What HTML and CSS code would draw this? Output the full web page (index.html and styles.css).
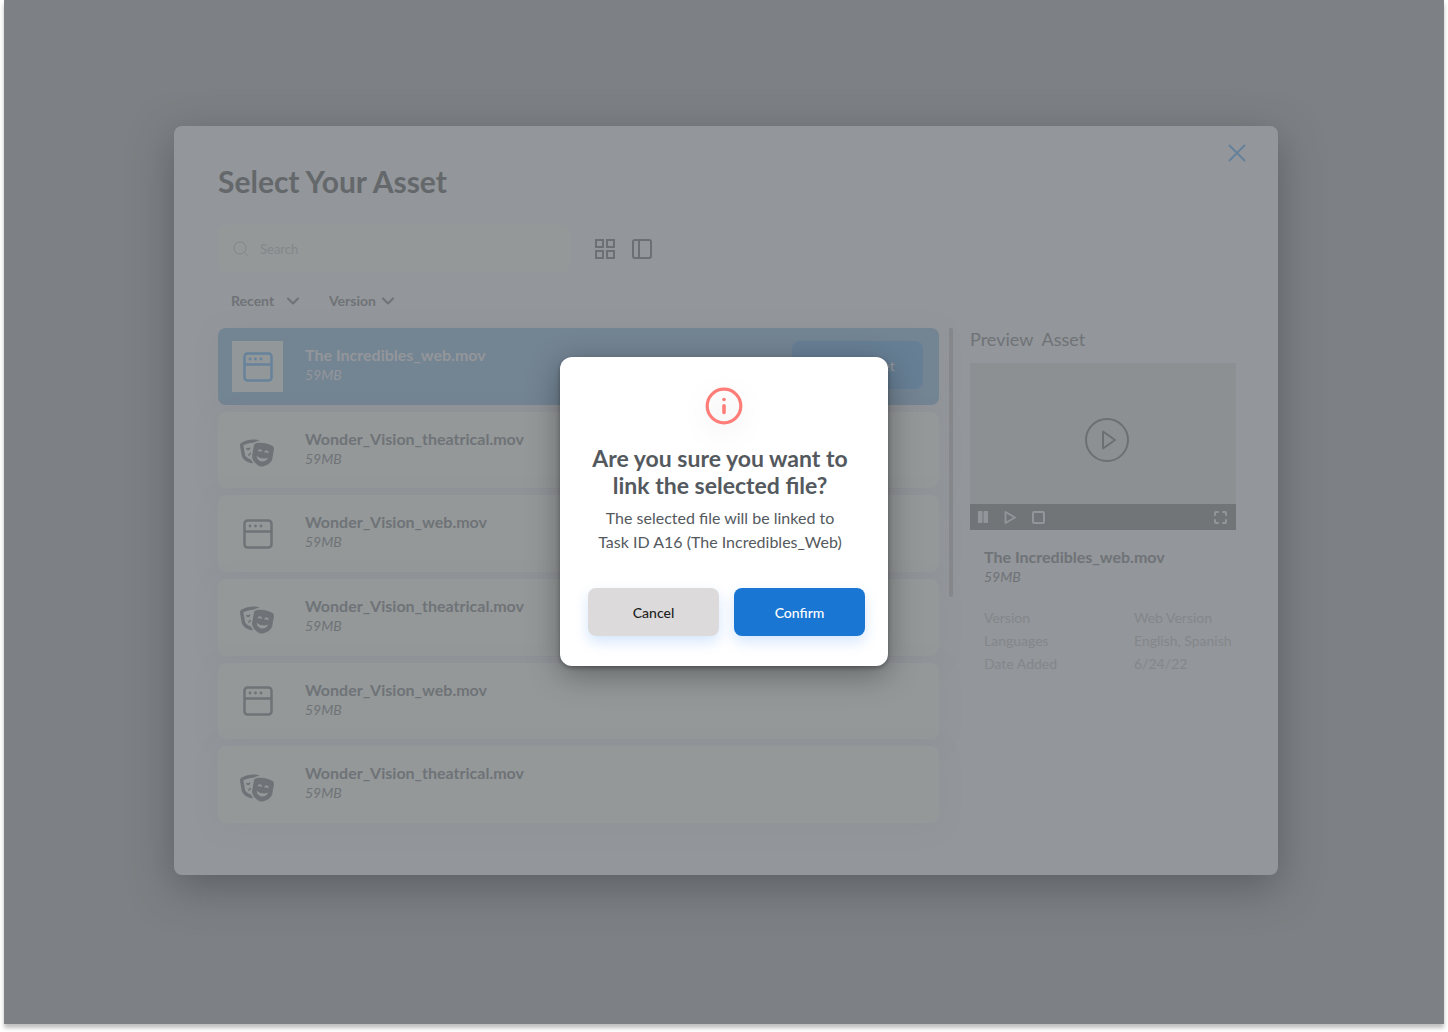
FILE: index.html
```html
<!DOCTYPE html>
<html lang="en">
<head>
  <meta charset="UTF-8">
  <meta name="viewport" content="width=device-width, initial-scale=1.0">
  <title>Select Your Asset</title>
  <link rel="stylesheet" href="styles.css">
</head>
<body>
  <!-- shared icons -->
  <svg class="sprite" aria-hidden="true">
    <symbol id="icon-web" viewBox="0 0 30 30">
      <rect x="1.5" y="1.5" width="27" height="27" rx="3" fill="none" stroke="currentColor" stroke-width="2.5"/>
      <path d="M1.5 12.5h27" fill="none" stroke="currentColor" stroke-width="2.5"/>
      <circle cx="7" cy="7" r="1.4" fill="currentColor"/>
      <circle cx="12.5" cy="7" r="1.4" fill="currentColor"/>
      <circle cx="18" cy="7" r="1.4" fill="currentColor"/>
    </symbol>
    <symbol id="icon-masks" viewBox="0 -120 640 640" preserveAspectRatio="xMinYMid meet">
      <path fill="currentColor" d="M206.86 245.15c-35.88 10.45-59.95 41.2-57.53 74.1 11.4-12.72 28.81-23.7 49.9-30.92l7.63-43.18zM95.81 295L64.08 115.49c-.29-1.62.28-2.62.24-2.65 57.76-32.06 123.12-49.01 189.01-49.01 1.61 0 3.23.17 4.85.19 13.95-13.47 31.73-22.83 51.59-26 18.89-3.02 38.05-4.55 57.18-5.32-9.99-13.95-24.48-24.23-41.77-27C301.27 1.89 277.24 0 253.32 0 176.66 0 101.02 19.42 33.2 57.06 9.03 70.48-3.92 98.48 1.05 126.58l31.73 179.51c14.23 80.52 136.33 142.08 204.45 142.08 3.59 0 6.75-.46 10.01-.8-13.52-17.08-28.94-40.48-39.5-67.58-47.61-12.98-106.06-51.62-111.93-84.79zm97.55-137.46c-.73-4.12-2.23-7.87-4.07-11.4-8.25 8.91-20.67 15.75-35.32 18.32-14.65 2.58-28.67.4-39.48-5.17-.52 3.94-.64 7.98.09 12.1 3.84 21.7 24.58 36.19 46.34 32.37 21.75-3.82 36.28-24.52 32.44-46.22zM606.8 120.9c-88.98-49.38-191.43-67.41-291.98-51.35-27.31 4.36-49.08 26.26-54.04 54.36l-31.73 179.51c-15.39 87.05 95.28 196.27 158.31 207.35 63.03 11.09 204.47-53.79 219.86-140.84l31.73-179.51c4.97-28.11-7.98-56.11-32.15-69.52zm-273.24 96.8c3.84-21.7 24.58-36.19 46.34-32.36 21.76 3.83 36.28 24.52 32.45 46.22-.73 4.12-2.23 7.87-4.07 11.4-8.25-8.91-20.67-15.75-35.32-18.32-14.65-2.58-28.67-.4-39.48 5.17-.53-3.95-.65-7.99.08-12.11zm70.47 198.76c-55.68-9.79-93.52-59.27-89.04-112.9 20.6 25.54 56.21 46.17 99.49 53.78 43.28 7.61 83.82.37 111.93-16.6-14.18 51.94-66.71 85.51-122.38 75.72zm130.3-151.34c-8.25-8.91-20.68-15.75-35.33-18.32-14.65-2.58-28.67-.4-39.48 5.17-.52-3.94-.64-7.98.09-12.1 3.84-21.7 24.58-36.19 46.34-32.37 21.75 3.83 36.28 24.52 32.45 46.22-.73 4.13-2.23 7.88-4.07 11.4z"/>
    </symbol>
    <symbol id="icon-chevron" viewBox="0 0 12 8">
      <path d="M1 1.5l5 5 5-5" fill="none" stroke="currentColor" stroke-width="2" stroke-linecap="round" stroke-linejoin="round"/>
    </symbol>
  </svg>

  <div class="screen">
    <main class="modal">
      <button class="close" aria-label="Close">
        <svg width="18" height="18" viewBox="0 0 18 18"><path d="M1.5 1.5l15 15M16.5 1.5l-15 15" fill="none" stroke="currentColor" stroke-width="2" stroke-linecap="round"/></svg>
      </button>
      <h1>Select Your Asset</h1>

      <div class="toolbar">
        <label class="search">
          <svg width="16" height="16" viewBox="0 0 16 16"><circle cx="7" cy="7" r="6" fill="none" stroke="currentColor"/><path d="M11.5 11.5l3 3" stroke="currentColor" stroke-linecap="round"/></svg>
          <input type="search" placeholder="Search" aria-label="Search">
        </label>
        <button class="view" aria-label="Grid view">
          <svg width="20" height="20" viewBox="0 0 20 20"><path d="M1 1h7v7H1zM12 1h7v7h-7zM1 12h7v7H1zM12 12h7v7h-7z" fill="none" stroke="currentColor" stroke-width="2"/></svg>
        </button>
        <button class="view" aria-label="Column view">
          <svg width="20" height="20" viewBox="0 0 20 20"><rect x="1" y="1" width="18" height="18" rx="2" fill="none" stroke="currentColor" stroke-width="2"/><path d="M7 1v18" stroke="currentColor" stroke-width="2"/></svg>
        </button>
      </div>

      <div class="filters">
        <div class="filter recent">
          <select aria-label="Sort order"><option>Recent</option></select>
          <svg width="12" height="8"><use href="#icon-chevron"/></svg>
        </div>
        <div class="filter version">
          <select aria-label="Version"><option>Version</option></select>
          <svg width="12" height="8"><use href="#icon-chevron"/></svg>
        </div>
      </div>

      <div class="content">
        <ul class="assets">
          <li class="asset selected">
            <span class="thumb"><svg width="30" height="30"><use href="#icon-web"/></svg></span>
            <div class="info"><h3>The Incredibles_web.mov</h3><p>59MB</p></div>
            <button class="select-asset">Select Asset</button>
          </li>
          <li class="asset">
            <span class="thumb"><svg width="35" height="34"><use href="#icon-masks"/></svg></span>
            <div class="info"><h3>Wonder_Vision_theatrical.mov</h3><p>59MB</p></div>
          </li>
          <li class="asset">
            <span class="thumb"><svg width="30" height="30"><use href="#icon-web"/></svg></span>
            <div class="info"><h3>Wonder_Vision_web.mov</h3><p>59MB</p></div>
          </li>
          <li class="asset">
            <span class="thumb"><svg width="35" height="34"><use href="#icon-masks"/></svg></span>
            <div class="info"><h3>Wonder_Vision_theatrical.mov</h3><p>59MB</p></div>
          </li>
          <li class="asset">
            <span class="thumb"><svg width="30" height="30"><use href="#icon-web"/></svg></span>
            <div class="info"><h3>Wonder_Vision_web.mov</h3><p>59MB</p></div>
          </li>
          <li class="asset">
            <span class="thumb"><svg width="35" height="34"><use href="#icon-masks"/></svg></span>
            <div class="info"><h3>Wonder_Vision_theatrical.mov</h3><p>59MB</p></div>
          </li>
        </ul>
        <div class="scrollbar"></div>

        <aside class="preview">
          <h2>Preview  Asset</h2>
          <div class="player">
            <button class="play" aria-label="Play preview">
              <svg width="44" height="44" viewBox="0 0 44 44" fill="none" stroke="currentColor"><circle cx="22" cy="22" r="21" stroke-width="2"/><path d="M18 13.5v17l12-8.5z" stroke-width="2" stroke-linejoin="round"/></svg>
            </button>
            <div class="controls">
              <button aria-label="Pause"><svg width="10" height="12" viewBox="0 0 10 12"><path d="M.5.5h3.500v11H.5zM6 .5h3.500v11H6z" fill="currentColor" stroke="currentColor" stroke-linejoin="round"/></svg></button>
              <button aria-label="Play"><svg width="12" height="13" viewBox="0 0 12 13"><path d="M1.500 1v11l9.500-5.500z" fill="none" stroke="currentColor" stroke-width="1.8" stroke-linejoin="round"/></svg></button>
              <button aria-label="Stop"><svg width="13" height="13" viewBox="0 0 13 13"><rect x="1" y="1" width="11" height="11" rx="1" fill="none" stroke="currentColor" stroke-width="2"/></svg></button>
              <button class="fullscreen" aria-label="Full screen"><svg width="13" height="13" viewBox="0 0 13 13"><path d="M1 4V2a1 1 0 0 1 1-1h2M9 1h2a1 1 0 0 1 1 1v2M12 9v2a1 1 0 0 1-1 1H9M4 12H2a1 1 0 0 1-1-1V9" fill="none" stroke="currentColor" stroke-width="2" stroke-linecap="round"/></svg></button>
            </div>
          </div>
          <div class="details">
            <div class="info"><h3>The Incredibles_web.mov</h3><p>59MB</p></div>
            <dl>
              <dt>Version</dt><dd>Web Version</dd>
              <dt>Languages</dt><dd>English, Spanish</dd>
              <dt>Date Added</dt><dd>6/24/22</dd>
            </dl>
          </div>
        </aside>
      </div>
    </main>

    <div class="overlay">
      <div class="dialog" role="alertdialog" aria-labelledby="dialog-title" aria-describedby="dialog-text">
        <svg class="alert" width="38" height="38" viewBox="0 0 38 38">
          <circle cx="19" cy="19" r="16.8" fill="none" stroke="currentColor" stroke-width="3.2"/>
          <circle cx="19" cy="12.5" r="1.8" fill="currentColor"/>
          <path d="M19 18.7v6.8" stroke="currentColor" stroke-width="3.6" stroke-linecap="round"/>
        </svg>
        <div class="message">
          <h2 id="dialog-title">Are you sure you want to<br>link the selected file?</h2>
          <p id="dialog-text">The selected file will be linked to<br>Task ID A16 (The Incredibles_Web)</p>
        </div>
        <div class="actions">
          <button class="cancel">Cancel</button>
          <button class="confirm">Confirm</button>
        </div>
      </div>
    </div>
  </div>
</body>
</html>
```

FILE: styles.css
```css
* {
  box-sizing: border-box;
}
body {
  margin: 0;
  padding: 0 4px 8px;
  background: #ffffff;
  font-family: Lato, "Liberation Sans", sans-serif;
  color: #6f7377;
}
h1, h2, h3, p, ul, dl, dd {
  margin: 0;
  padding: 0;
}
button {
  border: none;
  padding: 0;
  background: none;
  color: inherit;
  font-family: inherit;
  cursor: pointer;
}
svg {
  display: block;
}
.sprite {
  position: absolute;
  width: 0;
  height: 0;
}
.screen {
  position: relative;
  min-height: calc(100vh - 8px);
  padding: 126px 166px 148px 170px;
  background: #7d8084;
  box-shadow: 0 4px 4px rgba(0,0,0,0.25);
}

/* asset picker */
.modal {
  position: relative;
  padding: 36px 42px 52px 44px;
  background: #93969a;
  border-radius: 8px;
  box-shadow: 0 12px 40px rgba(60,64,67,0.5);
}
.close {
  position: absolute;
  top: 18px;
  right: 32px;
  color: #66829b;
}
h1 {
  font-size: 30px;
  line-height: 38px;
  color: #64686b;
}
.toolbar {
  display: flex;
  align-items: center;
  margin-top: 25px;
}
.search {
  display: flex;
  align-items: center;
  gap: 11px;
  width: 352px;
  height: 48px;
  margin-right: 25px;
  padding-left: 15px;
  background: #949899;
  border-radius: 8px;
  color: #83878b;
}
.search input {
  flex: 1;
  min-width: 0;
  border: none;
  padding: 0;
  outline: none;
  background: none;
  font: 13px Lato, "Liberation Sans", sans-serif;
  color: inherit;
}
.search input::placeholder {
  color: #83878b;
}
.view {
  margin-right: 17px;
  color: #6c7073;
}
.filters {
  display: flex;
  gap: 30px;
  margin: 17px 0 18px;
  padding-left: 13px;
}
.filter {
  position: relative;
}
.filter select {
  display: block;
  width: 100%;
  height: 20px;
  border: none;
  padding: 0;
  appearance: none;
  background: none;
  font: bold 14px Lato, "Liberation Sans", sans-serif;
  color: #6f7377;
}
.filter svg {
  position: absolute;
  top: 7px;
  right: 0;
  pointer-events: none;
}
.recent {
  width: 68px;
}
.version {
  width: 65px;
}
.content {
  display: flex;
  align-items: flex-start;
}
.assets {
  flex: 1;
  display: grid;
  grid-auto-rows: 1fr;
  gap: 7px;
  min-height: 495px;
  list-style: none;
}
.asset {
  display: flex;
  align-items: flex-start;
  padding: 13px 16px 12px 14px;
  background: #949899;
  border-radius: 8px;
  box-shadow: 0 4px 24px rgba(125,129,138,0.15);
}
.thumb {
  display: flex;
  align-items: center;
  justify-content: center;
  width: 51px;
  height: 51px;
  margin-right: 22px;
}
.info {
  flex: 1;
}
.info h3 {
  margin-top: 4px;
  font-size: 16px;
  line-height: 20px;
}
.info p {
  font-size: 14px;
  font-style: italic;
  line-height: 20px;
}
.selected {
  background: #738493;
  color: #93969a;
}
.selected .thumb {
  background: #929799;
  color: #67839b;
}
.select-asset {
  width: 131px;
  height: 48px;
  border-radius: 8px;
  background: #677f95;
  font-size: 14px;
  font-weight: 500;
}
.scrollbar {
  width: 4px;
  height: 269px;
  margin: 0 17px 0 10px;
  border-radius: 2px;
  background: #85878a;
}

/* preview column */
.preview {
  width: 266px;
}
.preview h2 {
  margin-bottom: 13px;
  font-size: 18px;
  font-weight: normal;
  line-height: 22px;
  white-space: pre;
}
.player {
  background: #8c9092;
}
.play {
  display: block;
  margin: 0 auto;
  padding: 55px 0 42px 8px;
  color: #6c7073;
}
.controls {
  display: flex;
  align-items: center;
  gap: 16px;
  height: 26px;
  padding: 0 9px 0 8px;
  background: #717578;
  color: #92969a;
}
.fullscreen {
  margin-left: auto;
}
.details {
  padding: 13px 0 0 14px;
}
.details dl {
  display: grid;
  grid-template-columns: 150px 1fr;
  margin-top: 19px;
  font-size: 14px;
  line-height: 23px;
  color: #83878b;
  white-space: nowrap;
}

/* confirmation dialog */
.overlay {
  position: absolute;
  inset: 0;
  display: flex;
  align-items: center;
  justify-content: center;
  padding-bottom: 1px;
}
.dialog {
  width: 328px;
  padding: 30px 0;
  background: #ffffff;
  border-radius: 12px;
  box-shadow: 0 2px 4px rgba(0,0,0,0.3), 0 8px 32px rgba(0,0,0,0.35);
}
.alert {
  margin: 0 auto;
  color: #ff7d78;
  filter: drop-shadow(0 8px 12px rgba(0,0,0,0.12));
}
.message {
  padding: 20px 28px 0 20px;
  text-align: center;
  color: #54595e;
}
.message h2 {
  font-size: 23px;
  line-height: 27px;
}
.message p {
  margin-top: 7px;
  font-size: 16px;
  line-height: 24px;
}
.actions {
  display: flex;
  gap: 15px;
  margin-top: 34px;
  padding: 0 23px 0 28px;
}
.actions button {
  flex: 1;
  height: 48px;
  border-radius: 8px;
  font-size: 14px;
  font-weight: 500;
  box-shadow: 0 6px 14px rgba(24,119,242,0.18);
}
.actions .cancel {
  background: #dcdadb;
  color: #222222;
}
.actions .confirm {
  background: #1976d2;
  color: #ffffff;
}
```
